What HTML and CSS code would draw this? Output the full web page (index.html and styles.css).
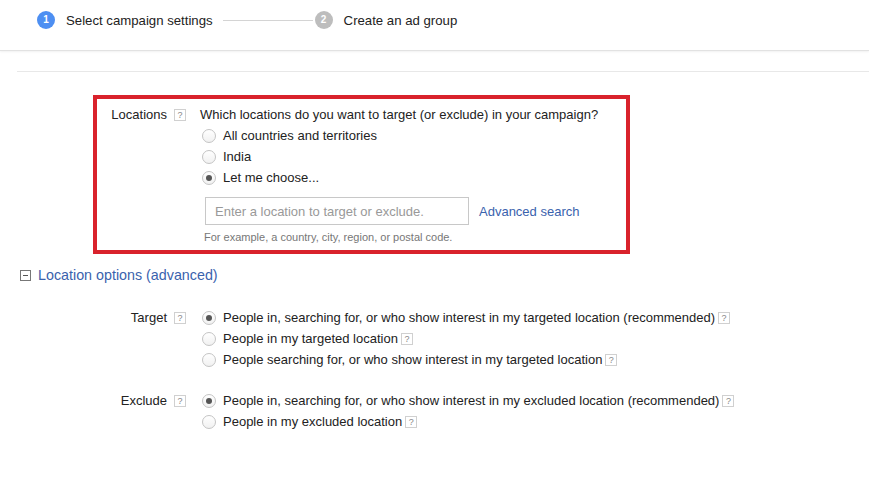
FILE: index.html
```html
<!DOCTYPE html>
<html lang="en">
<head>
    <meta charset="UTF-8">
    <meta name="viewport" content="width=device-width, initial-scale=1.0">
    <title>New campaign</title>
    <link rel="stylesheet" href="styles.css">
</head>
<body>
    <div id="steps">
        <div class="step active">
            <span class="step-num">1</span>
            <span class="step-name">Select campaign settings</span>
        </div>
        <div class="step-line"></div>
        <div class="step">
            <span class="step-num">2</span>
            <span class="step-name">Create an ad group</span>
        </div>
    </div>

    <div id="divider"></div>

    <div id="locations">
        <div class="row">
            <div class="row-label">Locations</div>
            <span class="help">?</span>
            <div class="row-body">
                <div class="line">Which locations do you want to target (or exclude) in your campaign?</div>
                <label class="line radio"><span class="dot"></span>All countries and territories</label>
                <label class="line radio"><span class="dot"></span>India</label>
                <label class="line radio"><span class="dot checked"></span>Let me choose...</label>
                <div class="search">
                    <input type="text" placeholder="Enter a location to target or exclude.">
                    <a href="#">Advanced search</a>
                </div>
                <div class="hint">For example, a country, city, region, or postal code.</div>
            </div>
        </div>
    </div>

    <div id="toggle">
        <svg width="11" height="11" viewBox="0 0 11 11">
            <rect x="0.5" y="0.5" width="10" height="10" fill="#fff" stroke="#777"/>
            <line x1="3" y1="5.5" x2="8" y2="5.5" stroke="#555"/>
        </svg>
        <a href="#">Location options (advanced)</a>
    </div>

    <div id="options">
        <div class="row">
            <div class="row-label">Target</div>
            <span class="help">?</span>
            <div class="row-body">
                <label class="line radio"><span class="dot checked"></span>People in, searching for, or who show interest in my targeted location (recommended)<span class="help">?</span></label>
                <label class="line radio"><span class="dot"></span>People in my targeted location<span class="help">?</span></label>
                <label class="line radio"><span class="dot"></span>People searching for, or who show interest in my targeted location<span class="help">?</span></label>
            </div>
        </div>
        <div class="row exclude">
            <div class="row-label">Exclude</div>
            <span class="help">?</span>
            <div class="row-body">
                <label class="line radio"><span class="dot checked"></span>People in, searching for, or who show interest in my excluded location (recommended)<span class="help">?</span></label>
                <label class="line radio"><span class="dot"></span>People in my excluded location<span class="help">?</span></label>
            </div>
        </div>
    </div>
</body>
</html>
```

FILE: styles.css
```css
body {
    margin: 0;
    background-color: #fff;
    color: #222;
    font-family: "Liberation Sans", Arial, sans-serif;
    font-size: 13px;
}

a {
    color: #3a62ad;
    text-decoration: none;
}

#steps {
    display: flex;
    align-items: center;
    height: 40px;
    padding: 0 0 10px 37px;
    border-bottom: 1px solid #e2e2e2;
    box-shadow: 0 1px 2px rgba(0, 0, 0, 0.06);
}

.step {
    display: flex;
    align-items: center;
}

.step-num {
    width: 18px;
    height: 18px;
    border-radius: 50%;
    background: #bdbdbd;
    color: #fff;
    font-size: 10px;
    font-weight: bold;
    line-height: 18px;
    text-align: center;
}

.step.active .step-num {
    background: #4d8ff2;
}

.step-name {
    margin-left: 11px;
    font-size: 13.2px;
}

.step-line {
    width: 90px;
    margin: 0 2px 0 10px;
    border-top: 1px solid #d4d4d4;
}

#divider {
    margin: 20px 0 0 17px;
    border-top: 1px solid #e8e8e8;
}

#locations {
    width: 537px;
    box-sizing: border-box;
    margin: 23px 0 0 93px;
    padding: 5px 0 6px;
    border: 4px solid #d9222c;
}

.row {
    display: flex;
    align-items: flex-start;
}

.row-label {
    width: 70px;
    line-height: 21px;
    text-align: right;
}

.help {
    display: inline-block;
    width: 10px;
    height: 10px;
    margin: 5px 14px 0 7px;
    border: 1px solid #d0d0d0;
    color: #888;
    font-size: 9px;
    line-height: 10px;
    text-align: center;
}

.line {
    display: flex;
    align-items: center;
    height: 21px;
}

.radio .help {
    margin: 0 0 0 3px;
}

.dot {
    position: relative;
    width: 12px;
    height: 12px;
    margin: 0 7px 0 2px;
    border: 1px solid #c4c4c4;
    border-radius: 50%;
    background: linear-gradient(#fff, #f1f1f1);
}

.dot.checked::after {
    content: "";
    position: absolute;
    left: 3px;
    top: 3px;
    width: 6px;
    height: 6px;
    border-radius: 50%;
    background: #555;
}

.search {
    display: flex;
    align-items: center;
    margin: 9px 0 0 5px;
}

.search input {
    width: 264px;
    height: 28px;
    box-sizing: border-box;
    padding: 0 9px;
    border: 1px solid #c8c8c8;
    font-family: inherit;
    font-size: 13px;
}

.search input::placeholder {
    color: #999;
}

.search a {
    margin-left: 10px;
}

.hint {
    margin: 5px 0 0 4px;
    color: #777;
    font-size: 11px;
    line-height: 14px;
}

#toggle {
    display: flex;
    align-items: center;
    height: 22px;
    margin: 10px 0 0 20px;
}

#toggle a {
    margin-left: 7px;
    font-size: 14.3px;
}

#options {
    padding: 21px 0 0 97px;
}

.exclude {
    margin-top: 20px;
}
```
